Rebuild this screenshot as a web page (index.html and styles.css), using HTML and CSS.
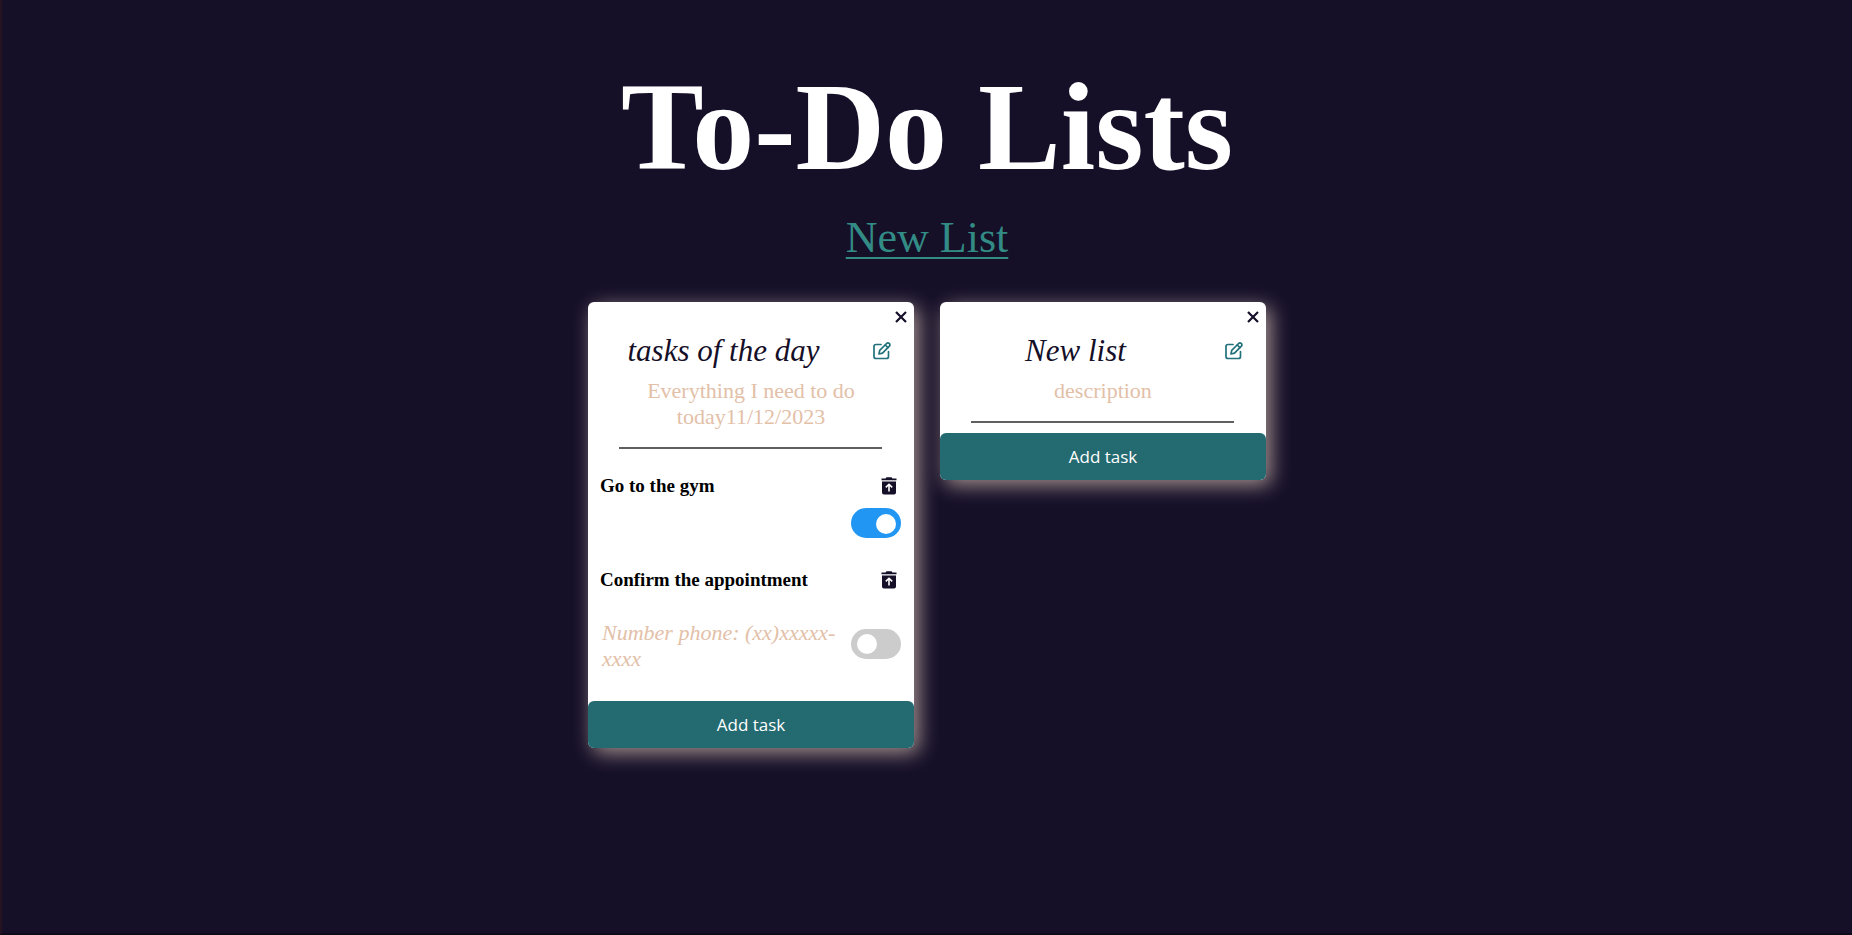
FILE: index.html
```html
<!DOCTYPE html>
<html lang="en">
<head>
<meta charset="utf-8">
<title>To-Do Lists</title>
<link rel="stylesheet" href="styles.css">
</head>
<body>
<svg class="sprite" aria-hidden="true">
  <symbol id="close" viewBox="0 0 12 12"><path d="M1 1L11 11M11 1L1 11" fill="none" stroke="currentColor" stroke-width="2.2"/></symbol>
  <symbol id="edit" viewBox="0 0 18 18"><g fill="none" stroke="currentColor" stroke-width="1.7" stroke-linejoin="round" stroke-linecap="round"><path d="M8 2.500H3Q1 2.500 1 4.500V14.500Q1 16.500 3 16.500H13.500Q15.500 16.500 15.500 14.500V9.500"/><path d="M6 12L6.700 8.300L13.600 1.500Q15 .4 16.400 1.600Q17.400 2.900 16.400 4.200L9.500 11.200Z"/><path d="M12.300 3L14.900 5.600"/></g></symbol>
  <symbol id="trash" viewBox="0 0 16 18"><path fill="currentColor" d="M.5 1.500H4.500L5.500 .3H10.500L11.500 1.500H15.500V3.200H.5ZM1 4.500H15V15.500Q15 17.500 13 17.500H3Q1 17.500 1 15.500Z"/><path d="M8 14.500V7.500M4.800 10.400L8 7.300L11.200 10.400" fill="none" stroke="#fff" stroke-width="1.6"/></symbol>
</svg>
<main class="page">
  <h1 class="title">To-Do Lists</h1>
  <a class="new-list" href="#">New List</a>
  <div class="lists">
    <section class="card">
      <button class="icon-button close" type="button" aria-label="Delete list"><svg><use href="#close"/></svg></button>
      <header class="card-head">
        <h2 class="card-title">tasks of the day</h2>
        <button class="icon-button edit" type="button" aria-label="Edit list"><svg><use href="#edit"/></svg></button>
      </header>
      <p class="description">Everything I need to do today11/12/2023</p>
      <hr class="rule">
      <ul class="tasks">
        <li class="task">
          <div class="task-head">
            <h3 class="task-title" id="task-gym">Go to the gym</h3>
            <button class="icon-button trash" type="button" aria-label="Delete task"><svg><use href="#trash"/></svg></button>
          </div>
          <div class="task-body">
            <input class="switch" type="checkbox" aria-labelledby="task-gym" checked>
          </div>
        </li>
        <li class="task">
          <div class="task-head">
            <h3 class="task-title" id="task-appointment">Confirm the appointment</h3>
            <button class="icon-button trash" type="button" aria-label="Delete task"><svg><use href="#trash"/></svg></button>
          </div>
          <div class="task-body">
            <p class="note">Number phone: (xx)xxxxx-xxxx</p>
            <input class="switch" type="checkbox" aria-labelledby="task-appointment">
          </div>
        </li>
      </ul>
      <button class="add" type="button">Add task</button>
    </section>
    <section class="card">
      <button class="icon-button close" type="button" aria-label="Delete list"><svg><use href="#close"/></svg></button>
      <header class="card-head">
        <h2 class="card-title">New list</h2>
        <button class="icon-button edit" type="button" aria-label="Edit list"><svg><use href="#edit"/></svg></button>
      </header>
      <p class="description">description</p>
      <hr class="rule">
      <button class="add" type="button">Add task</button>
    </section>
  </div>
</main>
</body>
</html>
```

FILE: styles.css
```css
* { box-sizing: border-box; }
body {
  margin: 0;
  min-height: 100vh;
  background: #150f28;
  border-left: 2px solid #261321;
  border-bottom: 2px solid #0e0a1c;
  font-family: "Liberation Serif", "Times New Roman", serif;
}
h1, h2, h3, p, ul { margin: 0; padding: 0; font-weight: normal; }
ul { list-style: none; }
.sprite { display: none; }
.page {
  display: flex;
  flex-direction: column;
  align-items: center;
  padding: 58px 20px;
}
.title { font-size: 124px; line-height: 140px; font-weight: bold; color: #fff; }
.new-list {
  margin-top: 14px;
  font-size: 44px;
  line-height: 52px;
  color: #338b85;
  text-decoration-thickness: 2px;
  text-underline-offset: 5px;
}
.lists {
  display: flex;
  flex-wrap: wrap;
  justify-content: center;
  align-items: flex-start;
  gap: 26px;
  margin-top: 38px;
}
.card {
  position: relative;
  width: 326px;
  background: #fff;
  border-radius: 6px;
  box-shadow: 5px 5px 20px #a5928f;
}
.icon-button {
  display: block;
  padding: 0;
  border: 0;
  background: none;
  color: #150f28;
  cursor: pointer;
}
.icon-button svg { display: block; width: 100%; height: 100%; }
.close { position: absolute; top: 9px; right: 7px; width: 12px; height: 12px; }
.card-head {
  display: flex;
  align-items: center;
  padding: 32px 23px 0 0;
}
.card-title {
  flex: 1;
  padding-right: 14px;
  text-align: center;
  font-size: 31px;
  line-height: 34px;
  font-style: italic;
  color: #150f28;
}
.edit { width: 18px; height: 18px; color: #23727b; }
.description {
  padding: 10px 48px 0;
  font-size: 22px;
  line-height: 26px;
  text-align: center;
  color: #e3c0a8;
}
.rule {
  height: 2px;
  margin: 17px 32px 10px 31px;
  border: 0;
  background: #606060;
}
.tasks {
  display: grid;
  gap: 30px;
  padding: 15px 13px 15px 12px;
}
.task-head { display: flex; justify-content: space-between; align-items: center; height: 24px; padding-right: 4px; }
.task-title { font-size: 19px; line-height: 24px; font-weight: bold; color: #000; }
.trash { width: 16px; height: 18px; }
.task-body { display: flex; align-items: center; justify-content: flex-end; padding-top: 10px; }
.note {
  flex: 1;
  padding: 18px 0 14px 2px;
  font-size: 22px;
  line-height: 26px;
  font-style: italic;
  color: #e3c0a8;
}
.switch {
  appearance: none;
  flex: none;
  display: flex;
  align-items: center;
  width: 50px;
  height: 30px;
  margin: 0;
  padding: 0 6px;
  border-radius: 15px;
  background: #ccc;
}
.switch::before { content: ""; width: 20px; height: 20px; border-radius: 50%; background: #fff; }
.switch:checked { justify-content: flex-end; padding: 2px 5px 0; background: #2196f3; }
.add {
  display: block;
  width: 100%;
  height: 47px;
  border: 0;
  border-radius: 6px;
  background: #246a71;
  color: #fff;
  font: 17px "Open Sans", "Noto Sans", sans-serif;
}
```
